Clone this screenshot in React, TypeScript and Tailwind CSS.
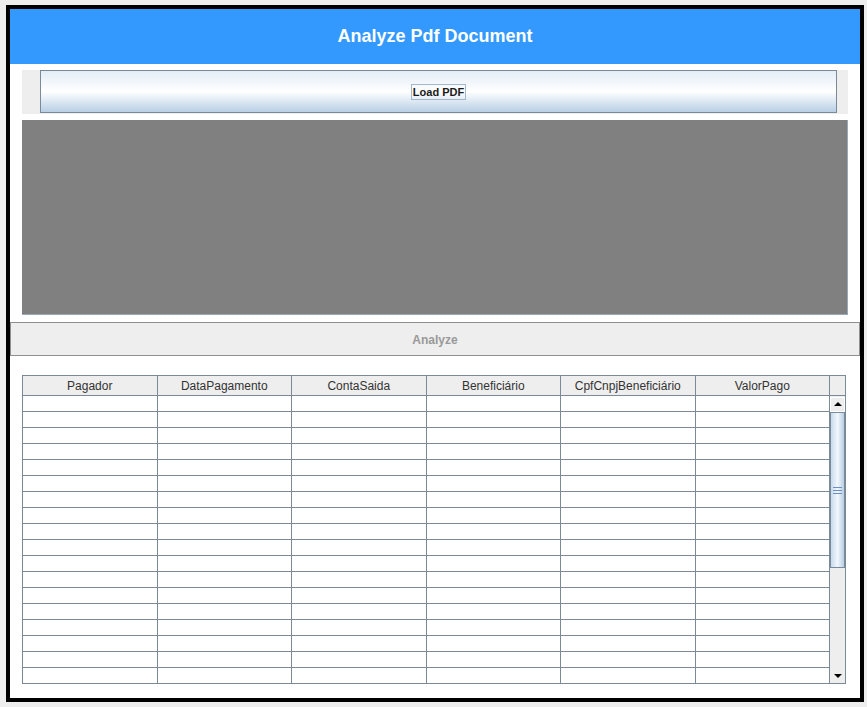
const columns = ["Pagador", "DataPagamento", "ContaSaida", "Beneficiário", "CpfCnpjBeneficiário", "ValorPago"];
const rows = Array.from({ length: 18 }, (_, i) => i);

function ScrollBar() {
  return (
    <div className="flex w-[16px] flex-col">
      <div className="h-[21px] border-b border-t border-r border-[#7a8a99] bg-[#eeeeee]" />
      <div className="flex h-[16px] items-center justify-center border-r border-[#7a8a99] bg-[#eeeeee]">
        <div className="h-[15px] w-[15px] border border-white bg-[#eeeeee] flex items-center justify-center">
          <svg width="8" height="5" viewBox="0 0 8 5"><path d="M0 4 L4 0 L8 4 Z" fill="#000" /></svg>
        </div>
      </div>
      <div className="flex flex-1 flex-col bg-[#eeeeee] border-r border-[#7a8a99]">
        <div className="flex h-[156px] items-center justify-center border border-[#7a8a99] bg-gradient-to-r from-[#c8daee] via-[#f2f7fc] to-[#b8cfe5]">
          <div className="flex flex-col gap-[2px]">
            <div className="h-px w-[9px] bg-[#6b8fc4]" />
            <div className="h-px w-[9px] bg-[#6b8fc4]" />
            <div className="h-px w-[9px] bg-[#6b8fc4]" />
          </div>
        </div>
      </div>
      <div className="flex h-[16px] items-center justify-center border-r border-b border-[#7a8a99] bg-[#eeeeee]">
        <svg width="8" height="5" viewBox="0 0 8 5"><path d="M0 1 L8 1 L4 5 Z" fill="#000" /></svg>
      </div>
    </div>
  );
}

export default function App() {
  return (
    <div className="h-[707px] w-[867px] bg-[#eeeeee] pl-[6px] pt-[5px]" style={{ fontFamily: '"Liberation Sans", Arial, sans-serif' }}>
      <div className="flex h-[697px] w-[858px] flex-col border-4 border-black bg-white">
        <div className="flex h-[55px] items-center justify-center bg-[#3399ff] pb-[1px] text-[18px] font-bold text-white">
          Analyze Pdf Document
        </div>

        <div className="mx-[12px] mt-[6px] h-[44px] bg-[#eeeeee] pl-[18px] pr-[11px]">
          <button className="flex h-[43px] w-full items-center justify-center border border-[#7a8a99] bg-gradient-to-b from-[#e3ecf6] via-[#ffffff] to-[#b8cfe5]">
            <span className="border border-[#a3b8cc] px-px text-[11px] font-bold leading-[14px] text-[#1a1a1a]">Load PDF</span>
          </button>
        </div>

        <div className="mx-[12px] mt-[6px] h-[195px] border-b border-r border-[#9aa9b8] bg-[#808080]" />

        <button className="mt-[7px] flex h-[34px] w-full items-center justify-center border border-[#8e8f8f] bg-[#eeeeee] pt-[2px] text-[12px] font-bold text-[#999999]">
          Analyze
        </button>

        <div className="ml-[12px] mt-[19px] flex h-[309px] w-[824px]">
          <div className="flex w-[808px] flex-col">
            <div className="flex h-[21px] border-b border-t border-l border-[#7a8a99] bg-[#eeeeee]">
              {columns.map((c) => (
                <div key={c} className="flex flex-1 items-center justify-center border-r border-[#7a8a99] pt-px text-[12px] text-[#333333]">
                  {c}
                </div>
              ))}
            </div>
            {rows.map((r) => (
              <div key={r} className="flex h-[16px] border-b border-l border-[#7a8a99]">
                {columns.map((c) => (
                  <div key={c} className="flex-1 border-r border-[#7a8a99]" />
                ))}
              </div>
            ))}
          </div>
          <ScrollBar />
        </div>
      </div>
    </div>
  );
}
